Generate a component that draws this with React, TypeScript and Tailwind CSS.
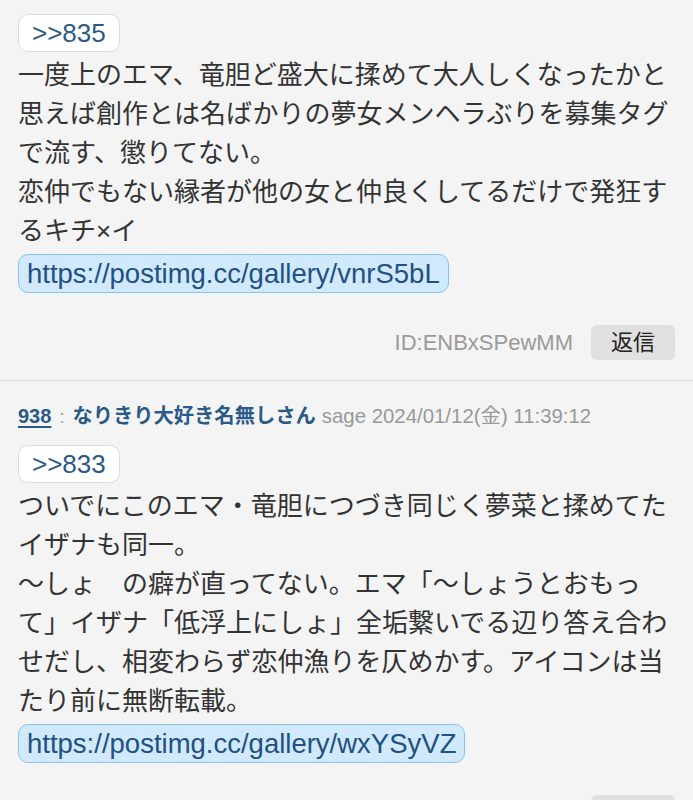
const FONT = "font-['Liberation_Sans','Noto_Sans_CJK_JP',sans-serif]";

type Post = {
  no?: string;
  name?: string;
  date?: string;
  anchor: string;
  lines: string[];
  url: string;
  id?: string;
};

const posts: Post[] = [
  {
    anchor: ">>835",
    lines: [
      "一度上のエマ、竜胆ど盛大に揉めて大人しくなったかと思えば創作とは名ばかりの夢女メンヘラぶりを募集タグで流す、懲りてない。",
      "恋仲でもない縁者が他の女と仲良くしてるだけで発狂するキチ×イ",
    ],
    url: "https://postimg.cc/gallery/vnrS5bL",
    id: "ID:ENBxSPewMM",
  },
  {
    no: "938",
    name: "なりきり大好き名無しさん",
    date: "sage 2024/01/12(金) 11:39:12",
    anchor: ">>833",
    lines: [
      "ついでにこのエマ・竜胆につづき同じく夢菜と揉めてたイザナも同一。",
      "〜しょ　の癖が直ってない。エマ「〜しょうとおもって」イザナ「低浮上にしょ」全垢繋いでる辺り答え合わせだし、相変わらず恋仲漁りを仄めかす。アイコンは当たり前に無断転載。",
    ],
    url: "https://postimg.cc/gallery/wxYSyVZ",
  },
];

function PostItem({ post, first }: { post: Post; first: boolean }) {
  return (
    <div
      className={`px-[18px] ${first ? "pt-[14px]" : "pt-[20px] border-t border-[#d9d9d9]"} pb-[20px]`}
    >
      {post.no && (
        <div className="text-[20px] leading-[30px] mb-[13px] whitespace-nowrap">
          <span className="font-bold text-[#2a5a88] underline underline-offset-[3px]">
            {post.no}
          </span>
          <span className="text-[#999] mx-[8px] text-[18px]">:</span>
          <span className="font-bold text-[#2a5a88] text-[20.3px]">{post.name}</span>
          <span className="text-[#999] text-[20.4px] ml-[6px]">{post.date}</span>
        </div>
      )}
      <div>
        <span className="inline-block bg-white border border-[#dcdcdc] rounded-[10px] px-[13px] h-[38px] leading-[36px] text-[26px] text-[#2b5a87]">
          {post.anchor}
        </span>
      </div>
      <div className="mt-[4px] text-[26px] leading-[39px] text-[#333]">
        {post.lines.map((l, i) => (
          <p key={i}>{l}</p>
        ))}
      </div>
      <div className="mt-[3px]">
        <span className="inline-block bg-[#d0e9fc] border border-[#88c3ec] rounded-[10px] px-[8px] h-[39px] leading-[37px] text-[27.5px] text-[#225080] whitespace-nowrap">
          {post.url}
        </span>
      </div>
      <div className="flex justify-end items-center mt-[32px] gap-[18px]">
        {post.id && <span className="text-[22px] text-[#9a9a9a]">{post.id}</span>}
        <button className="w-[84px] h-[35px] rounded-[6px] bg-[#e0e0e0] text-[22px] text-[#222]">
          返信
        </button>
      </div>
    </div>
  );
}

export default function App() {
  return (
    <div className={`${FONT} bg-[#f4f4f4] h-[800px] w-[693px] overflow-hidden`}>
      {posts.map((p, i) => (
        <PostItem key={i} post={p} first={i === 0} />
      ))}
    </div>
  );
}
